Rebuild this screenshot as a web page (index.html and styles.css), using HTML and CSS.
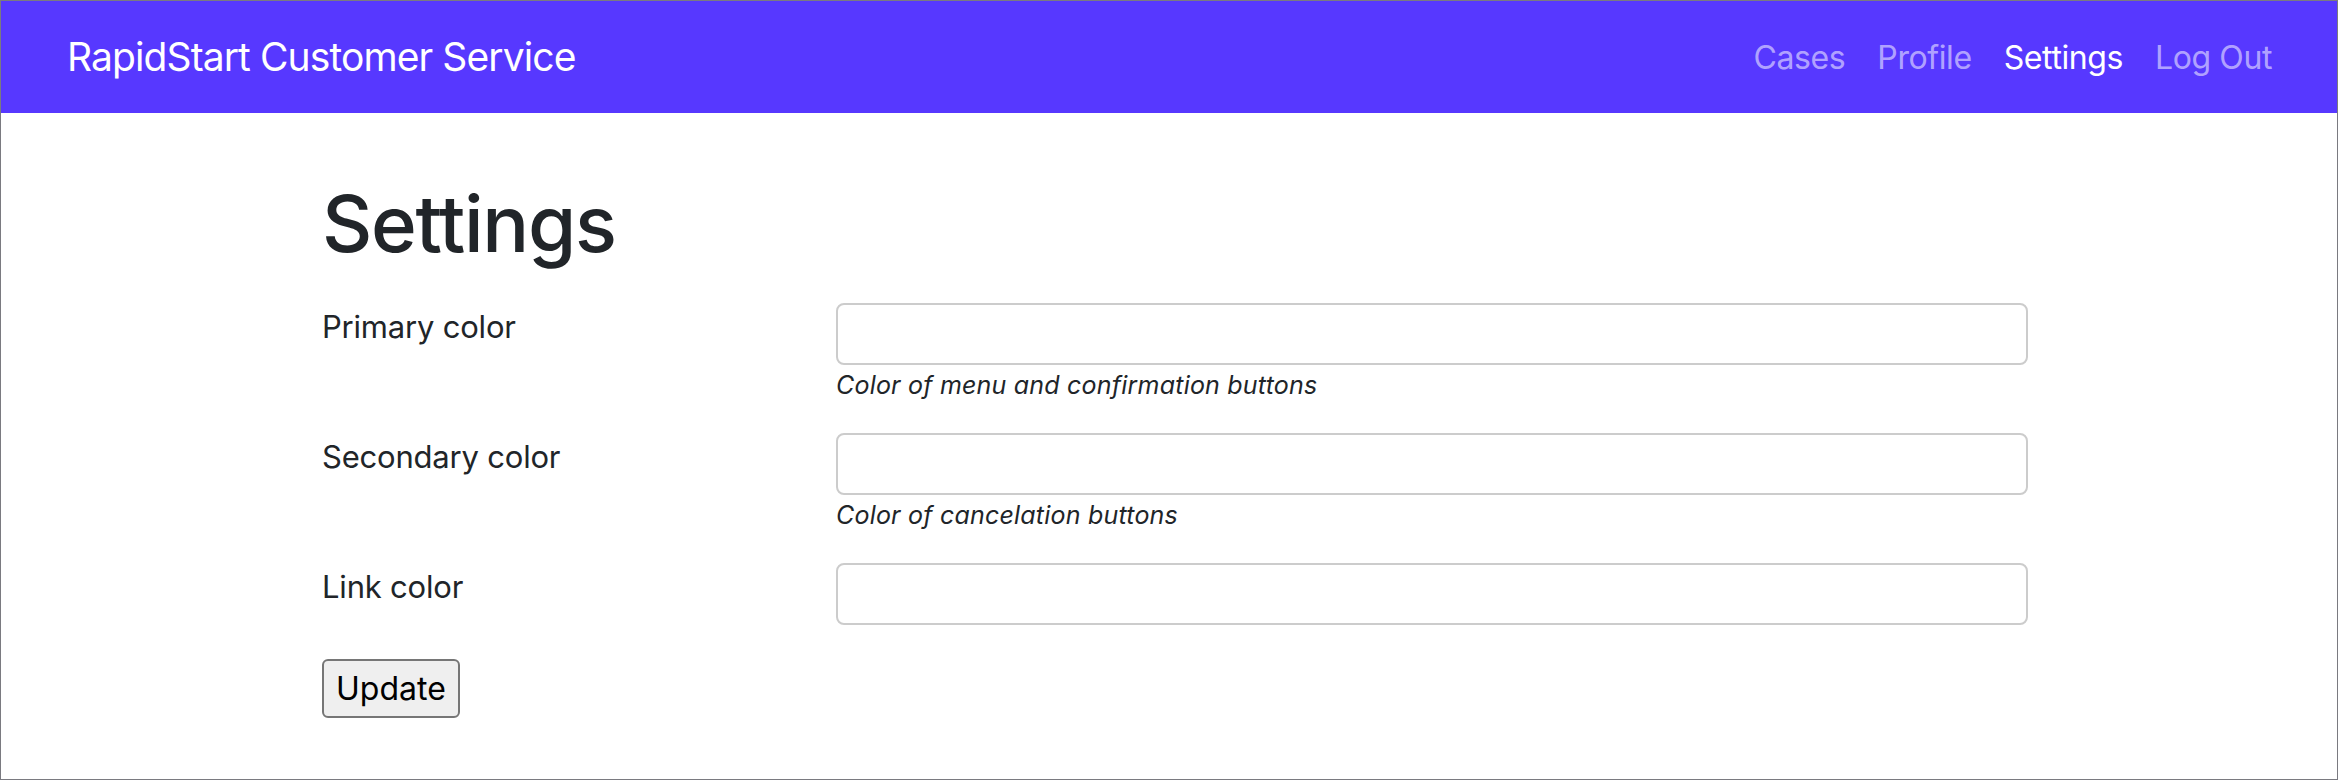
FILE: index.html
```html
<!DOCTYPE html>
<html lang="en">
<head>
<meta charset="utf-8">
<title>Settings - RapidStart Customer Service</title>
<link rel="stylesheet" href="styles.css">
</head>
<body>
<div class="frame">
  <nav class="navbar">
    <a class="brand" href="#">RapidStart Customer Service</a>
    <ul class="nav">
      <li><a class="nav-link" href="#">Cases</a></li>
      <li><a class="nav-link" href="#">Profile</a></li>
      <li><a class="nav-link active" href="#">Settings</a></li>
      <li><a class="nav-link" href="#">Log Out</a></li>
    </ul>
  </nav>
  <main class="container">
    <h1 class="title">Settings</h1>
    <form class="form">
      <div class="row">
        <label class="label" for="primary">Primary color</label>
        <div class="field">
          <input class="input" id="primary" type="text">
          <div class="help">Color of menu and confirmation buttons</div>
        </div>
      </div>
      <div class="row">
        <label class="label" for="secondary">Secondary color</label>
        <div class="field">
          <input class="input" id="secondary" type="text">
          <div class="help">Color of cancelation buttons</div>
        </div>
      </div>
      <div class="row">
        <label class="label" for="link">Link color</label>
        <div class="field">
          <input class="input" id="link" type="text">
        </div>
      </div>
      <button class="button" type="submit">Update</button>
    </form>
  </main>
</div>
</body>
</html>
```

FILE: styles.css
```css
html, body {
  margin: 0;
  padding: 0;
}
body {
  font-family: Inter, "Noto Sans", "Liberation Sans", sans-serif;
  color: #212529;
  background: #ffffff;
}
.frame {
  box-sizing: border-box;
  height: 780px;
  border: 1px solid #7a7a80;
  overflow: hidden;
}
.navbar {
  height: 112px;
  background: #5738ff;
  display: flex;
  align-items: center;
  justify-content: space-between;
  padding: 0 49px 0 66px;
}
.brand {
  color: #ffffff;
  text-decoration: none;
  font-size: 39px;
  line-height: 60px;
  letter-spacing: -0.9px;
}
.nav {
  list-style: none;
  margin: 0;
  padding: 0;
  display: flex;
}
.nav-link {
  display: block;
  padding: 2px 16px 0;
  font-size: 32px;
  line-height: 48px;
  color: rgba(255, 255, 255, 0.55);
  text-decoration: none;
  letter-spacing: -0.4px;
}
.nav-link.active {
  color: #ffffff;
}
.container {
  width: 1718px;
  box-sizing: border-box;
  margin: 0 auto;
  padding: 64px 0 0 12px;
}
.title {
  margin: 0 0 32px;
  font-size: 78px;
  font-weight: 500;
  line-height: 94px;
  letter-spacing: -1.3px;
}
.row {
  display: grid;
  grid-template-columns: 474px 1fr;
  column-gap: 40px;
  margin-bottom: 30px;
}
.label {
  font-size: 31px;
  line-height: 48px;
  letter-spacing: -0.2px;
}
.field {
  display: flex;
  flex-direction: column;
}
.input {
  box-sizing: border-box;
  height: 62px;
  width: 100%;
  border: 2px solid #cccccc;
  border-radius: 8px;
  background: #ffffff;
  font: inherit;
  font-size: 32px;
  padding: 0 16px;
  margin: 0;
}
.help {
  margin-top: 2px;
  font-size: 25px;
  line-height: 36px;
  font-style: italic;
  letter-spacing: 0.2px;
}
.button {
  margin-top: 4px;
  box-sizing: border-box;
  height: 59px;
  padding: 0 12px;
  font-family: inherit;
  font-size: 32px;
  line-height: 39px;
  color: #000000;
  background: #efefef;
  border: 2px solid #767676;
  border-radius: 6px;
}
```
